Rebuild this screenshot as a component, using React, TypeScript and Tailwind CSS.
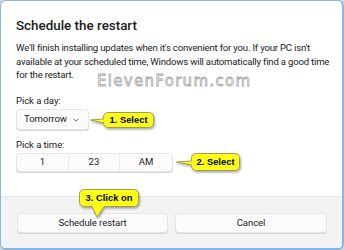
import React from "react";

const ui = { fontFamily: 'Roboto, "Noto Sans", sans-serif' };

function Callout({
  left,
  top,
  w,
  h,
  text,
  tail,
  pad,
}: {
  left: number;
  top: number;
  w: number;
  h: number;
  text: string;
  tail: "left" | "down";
  pad: number;
}) {
  const r = 5;
  let path = "";
  let svgLeft = left;
  let svgW = w + 3;
  let svgH = h + 3;
  const id = `sh-${left}-${top}`;
  if (tail === "left") {
    svgLeft = left - pad;
    svgW = w + pad + 3;
    const x0 = pad + 0.5;
    const y0 = 0.5;
    const x1 = pad + w - 0.5;
    const y1 = h - 0.5;
    const my = h / 2;
    path = `M ${x0 + r} ${y0} H ${x1 - r} Q ${x1} ${y0} ${x1} ${y0 + r} V ${y1 - r} Q ${x1} ${y1} ${x1 - r} ${y1} H ${x0 + r} Q ${x0} ${y1} ${x0} ${y1 - r} V ${my + 3} L 0.5 ${my} L ${x0} ${my - 1} V ${y0 + r} Q ${x0} ${y0} ${x0 + r} ${y0} Z`;
  } else {
    svgH = h + pad + 2;
    const x0 = 0.5;
    const y0 = 0.5;
    const x1 = w - 0.5;
    const y1 = h - 0.5;
    path = `M ${x0 + r} ${y0} H ${x1 - r} Q ${x1} ${y0} ${x1} ${y0 + r} V ${y1 - r} Q ${x1} ${y1} ${x1 - r} ${y1} H 25 L 18 ${h + pad} L 13 ${y1} H ${x0 + r} Q ${x0} ${y1} ${x0} ${y1 - r} V ${y0 + r} Q ${x0} ${y0} ${x0 + r} ${y0} Z`;
  }
  return (
    <>
      <svg className="absolute" style={{ left: svgLeft, top }} width={svgW} height={svgH}>
        <defs>
          <filter id={id} x="-20%" y="-30%" width="140%" height="170%">
            <feDropShadow dx="1" dy="1.5" stdDeviation="0.9" floodColor="#000" floodOpacity="0.35" />
          </filter>
        </defs>
        <path d={path} fill="#ffff14" stroke="#9c9a55" strokeWidth="1" filter={`url(#${id})`} />
      </svg>
      <div
        className="absolute flex items-center justify-center text-[9.4px] font-bold text-black"
        style={{ left, top, width: w, height: h, fontFamily: '"Liberation Sans", Arial, sans-serif' }}
      >
        {text}
      </div>
    </>
  );
}

export default function App() {
  return (
    <div className="w-[344px] h-[250px] bg-[#cfd6dd]" style={ui}>
      <div className="relative w-[344px] h-[250px] rounded-[6px] border border-[#86b8e6] border-r-2 border-b-2 bg-white flex flex-col overflow-hidden">
        <div className="flex-1 pl-[15px] pr-[10px] pt-[17px]">
          <div className="text-[13.4px] leading-[16px] font-medium text-[#1b1b1b]">Schedule the restart</div>
          <div className="mt-[7px] text-[9.6px] leading-[13.5px] text-[#1b1b1b] tracking-[-0.2px] whitespace-nowrap">
            We'll finish installing updates when it's convenient for you. If your PC isn't
            <br />
            available at your scheduled time, Windows will automatically find a good time
            <br />
            for the restart.
          </div>
          <div className="mt-[13.5px] text-[9.6px] leading-[12px] text-[#1b1b1b] tracking-[-0.1px]">Pick a day:</div>
          <div className="mt-[2px] w-[73px] h-[21px] rounded-[4px] border border-[#e6e6e6] bg-[#fbfbfb] flex items-center justify-between pl-[7px] pr-[9px] text-[9.6px] text-[#1b1b1b] tracking-[-0.1px] shadow-[0_1px_0_#d6d6d6]">
            <span>Tomorrow</span>
            <svg width="6" height="4" viewBox="0 0 6 4">
              <path d="M0.5 0.7 L3 3.2 L5.5 0.7" fill="none" stroke="#5a5a5a" strokeWidth="0.9" />
            </svg>
          </div>
          <div className="mt-[9px] text-[9.6px] leading-[12px] text-[#1b1b1b] tracking-[-0.1px]">Pick a time:</div>
          <div className="mt-[2px] w-[157px] h-[19px] rounded-[4px] border border-[#e6e6e6] bg-[#fbfbfb] grid grid-cols-3 text-[9.6px] text-[#1b1b1b] shadow-[0_1px_0_#d6d6d6]">
            <div className="flex items-center justify-center border-r border-[#ebebeb]">1</div>
            <div className="flex items-center justify-center border-r border-[#ebebeb]">23</div>
            <div className="flex items-center justify-center">AM</div>
          </div>
        </div>
        <div className="h-[52px] bg-[#f3f3f3] border-t border-[#e6e6e6] flex items-start gap-[7px] pl-[16px] pt-[16px]">
          <div className="w-[151px] h-[20px] rounded-[4px] border border-[#e6e6e6] bg-[#fbfbfb] flex items-center justify-center text-[9.6px] text-[#1b1b1b] tracking-[-0.1px] shadow-[0_1px_0_#d6d6d6]">
            Schedule restart
          </div>
          <div className="w-[152px] h-[20px] rounded-[4px] border border-[#e6e6e6] bg-[#fbfbfb] flex items-center justify-center text-[9.6px] text-[#1b1b1b] tracking-[-0.1px] shadow-[0_1px_0_#d6d6d6]">
            Cancel
          </div>
        </div>

        <div
          className="absolute left-[96px] top-[73px] text-[15px] leading-[15px] tracking-[1.3px] text-white [-webkit-text-stroke:0.8px_#a9a9a9]"
          style={{ fontFamily: '"DejaVu Sans", sans-serif' }}
        >
          ElevenForum.com
        </div>

        <Callout left={102} top={111} w={51} h={16} text="1. Select" tail="left" pad={13} />
        <Callout left={190} top={152} w={49} h={18} text="2. Select" tail="left" pad={15} />
        <Callout left={78} top={188} w={60} h={18} text="3. Click on" tail="down" pad={10} />
      </div>
    </div>
  );
}
